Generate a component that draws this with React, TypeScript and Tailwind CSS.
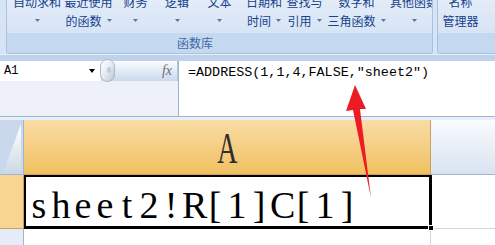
import React from "react";

const btns: { w: number; l1: string; l2?: string }[] = [
  { w: 60, l1: "自动求和" },
  { w: 43, l1: "最近使用", l2: "的函数" },
  { w: 51, l1: "财务" },
  { w: 32, l1: "逻辑" },
  { w: 53, l1: "文本" },
  { w: 36, l1: "日期和", l2: "时间" },
  { w: 45, l1: "查找与", l2: "引用" },
  { w: 59, l1: "数字和", l2: "三角函数" },
  { w: 56, l1: "其他函数" },
];

const Caret = () => (
  <svg width="5" height="3" viewBox="0 0 5 3" className="shrink-0">
    <path d="M0 0h5L2.5 3z" fill="#5b7aa3" />
  </svg>
);

const cellText = "sheet2!R[1]C[1]".split("");

export default function App() {
  const cjk = { fontFamily: '"Noto Sans CJK SC", "Noto Sans", sans-serif' };
  return (
    <div className="relative w-[495px] h-[245px] overflow-hidden bg-white" style={cjk}>
      {/* Ribbon */}
      <div className="flex h-[55px] pl-[6px] gap-[4px] bg-[#d6e4f5] border-b border-[#e6eef9]">
        <div className="flex flex-col w-[438px] h-[54px] border-x border-b border-[#a9c2e0] rounded-b-[3px] overflow-hidden">
          <div className="flex h-[33px] bg-gradient-to-b from-[#e3ecf8] to-[#d7e4f5]">
            {btns.map((b, i) => (
              <div
                key={i}
                className="flex flex-col items-center shrink-0 mt-[-8px] text-[12px] leading-[19px] text-[#15428b] whitespace-nowrap"
                style={{ width: b.w }}
              >
                <div>{b.l1}</div>
                <div className="flex items-center gap-[5px] h-[19px]">
                  {b.l2 && <span>{b.l2}</span>}
                  <Caret />
                </div>
              </div>
            ))}
          </div>
          <div className="h-[20px] bg-[#c4d8ef] text-[12px] leading-[20px] text-[#3e69a6] pl-[170px]">
            函数库
          </div>
        </div>
        <div className="flex flex-col w-[60px] h-[54px] border-l border-b border-[#a9c2e0] rounded-bl-[3px] overflow-hidden">
          <div className="flex h-[33px] bg-gradient-to-b from-[#e3ecf8] to-[#d7e4f5]">
            <div className="flex flex-col items-center w-[46px] mt-[-8px] text-[12px] leading-[19px] text-[#15428b] whitespace-nowrap">
              <div>名称</div>
              <div>管理器</div>
            </div>
          </div>
          <div className="h-[20px] bg-[#c4d8ef]" />
        </div>
      </div>

      {/* Formula bar */}
      <div className="h-[6px] bg-[#bed2eb]" />
      <div className="flex h-[55px]">
        <div className="flex flex-col w-[178px] bg-[#eef2f8]">
          <div className="flex h-[20px]">
            <div
              className="flex items-center justify-between w-[101px] h-full bg-white pl-[4px] pr-[6px] text-[12px] text-black"
              style={{ fontFamily: '"Liberation Mono", monospace' }}
            >
              <span>A1</span>
              <svg width="6" height="4" viewBox="0 0 6 4">
                <path d="M0 0h6L3 4z" fill="#000" />
              </svg>
            </div>
            <div className="relative flex items-center justify-end flex-1 h-full bg-gradient-to-b from-[#fbfcfe] to-[#c9d9ee] pr-[5px] border-r border-[#b6c7dc]">
              <div className="absolute left-[-1px] top-[-2px] w-[15px] h-[23px] rounded-full border border-[#a7b6c8] bg-gradient-to-br from-[#ffffff] via-[#e6ebf1] to-[#b9c5d3]">
                <div className="absolute left-[6px] top-[7px] w-[4px] h-[6px] rounded-full bg-[#c3cdd9]" />
              </div>
              <span
                className="italic text-[14px] leading-none text-[#6e6e6e]"
                style={{ fontFamily: '"Liberation Serif", serif' }}
              >
                fx
              </span>
            </div>
          </div>
        </div>
        <div className="w-px bg-[#9fb3cb]" />
        <div
          className="flex-1 bg-white pl-[9px] pt-[4px] text-[13.4px] leading-[16px] text-black whitespace-nowrap"
          style={{ fontFamily: '"Liberation Mono", monospace' }}
        >
          =ADDRESS(1,1,4,FALSE,"sheet2")
        </div>
      </div>
      <div className="h-px bg-[#9eb6ce]" />
      <div className="h-[3px] bg-[#e9eff8]" />

      {/* Column headers */}
      <div className="flex h-[55px]">
        <div className="w-[24px] h-full bg-[#c9d8ec] border-r border-b border-[#9eb6ce]">
          <svg width="23" height="54" viewBox="0 0 23 54">
            <defs>
              <linearGradient id="tri" x1="0" y1="0" x2="0" y2="1">
                <stop offset="0" stopColor="#ffffff" />
                <stop offset="1" stopColor="#d3dbe5" />
              </linearGradient>
            </defs>
            <polygon points="21,4 21,50 4,50" fill="url(#tri)" />
          </svg>
        </div>
        <div
          className="flex justify-center w-[407px] h-full pt-[6px] bg-gradient-to-b from-[#f9dca6] to-[#f1c15f] border-r border-b border-[#c9a061] text-[45px] leading-[45px] text-[#2e2e2e]"
          style={{ fontFamily: '"Liberation Serif", serif' }}
        >
          <span className="inline-block scale-x-[0.62]">A</span>
        </div>
        <div className="flex-1 h-full bg-gradient-to-b from-[#f9fbfe] to-[#d9e3f0] border-b border-[#9eb6ce]" />
      </div>

      {/* Row 1 */}
      <div className="flex h-[54px]">
        <div className="w-[24px] h-full bg-[#f9d592] border-r border-b border-[#c9a061]" />
        <div
          className="flex w-[408px] h-full bg-white border-l-2 border-t-2 border-r-[3px] border-b-[3px] border-black pl-[2px] pt-[9px] text-[38px] leading-[38px] text-black"
          style={{ fontFamily: '"Liberation Serif", serif' }}
        >
          {cellText.map((c, i) => (
            <span key={i} className="inline-block w-[22px] text-center shrink-0">
              {c}
            </span>
          ))}
        </div>
        <div className="flex-1 h-full border-b border-[#d0d7e5] mb-[1px]" />
      </div>

      {/* Row 2 */}
      <div className="flex h-[20px]">
        <div className="w-[24px] h-full bg-[#e4ecf7] border-r border-[#9eb6ce]" />
        <div className="w-[407px] h-full border-r border-[#d0d7e5]" />
        <div className="flex-1" />
      </div>

      {/* fill handle */}
      <div className="absolute left-[428px] top-[225px] w-[6px] h-[6px] bg-black border border-white" />

      {/* red arrow annotation */}
      <svg className="absolute inset-0 pointer-events-none" width="495" height="245" viewBox="0 0 495 245">
        <polygon points="355,85 366,109 360,109 371,198 353,110 346,111" fill="#ec1c24" />
      </svg>
    </div>
  );
}
